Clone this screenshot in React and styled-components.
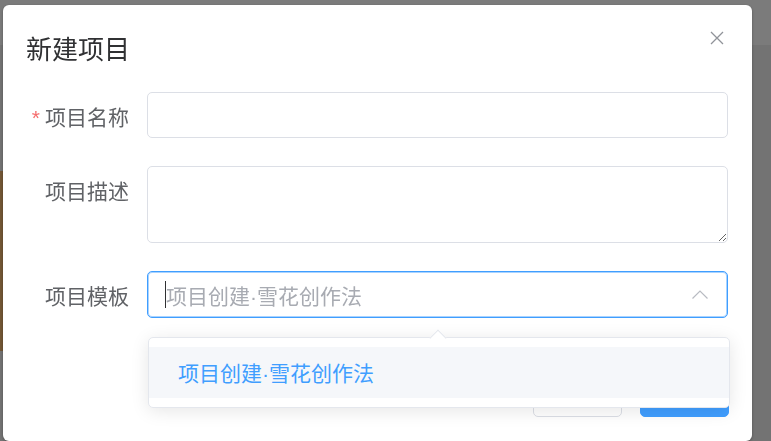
import React from "react";
import styled, { createGlobalStyle } from "styled-components";

const Global = createGlobalStyle`
  html, body { margin: 0; padding: 0; }
  body {
    width: 771px;
    height: 441px;
    overflow: hidden;
    font-family: "Liberation Sans", "Noto Sans CJK SC", sans-serif;
  }
  *, *::before, *::after { box-sizing: border-box; }
`;

/* page underneath the modal mask */
const Page = styled.div`
  width: 771px;
  height: 441px;
  display: flex;
  flex-direction: column;
  background: #e6e6e6;
`;
const TopBar = styled.header`
  flex: 0 0 45px;
  background: #f6f6f6;
`;
const Workspace = styled.main`
  flex: 1;
  padding-top: 126px;
`;
const CoverStrip = styled.div`
  width: 3px;
  height: 180px;
  background: #e6ae6c;
`;

/* modal */
const Mask = styled.div`
  position: fixed;
  inset: 0;
  background: rgba(0, 0, 0, 0.5);
  padding: 5px 0 0 3px;
`;
const Dialog = styled.div`
  width: 749px;
  height: 436px;
  background: #fff;
  border-radius: 6px;
  box-shadow: 0 1px 3px rgba(0, 0, 0, 0.3);
  display: flex;
  flex-direction: column;
`;
const Header = styled.div`
  display: flex;
  justify-content: space-between;
  align-items: flex-start;
  padding: 25px 24px 24px 23px;
`;
const Title = styled.h2`
  margin: 0;
  padding-top: 2px;
  font-size: 26px;
  line-height: 36px;
  font-weight: 400;
  color: #303133;
`;
const CloseButton = styled.button`
  width: 14px;
  height: 14px;
  margin: 1px 4px 0 0;
  padding: 0;
  border: 0;
  background: none;
  display: flex;
  cursor: pointer;
`;

const Form = styled.form`
  padding: 0 24px 0 23px;
`;
const FormItem = styled.div`
  display: grid;
  grid-template-columns: 121px 1fr;
  align-items: start;
  margin-bottom: 28px;
`;
const Label = styled.label`
  height: 46px;
  padding: 6px 18px 0 0;
  font-size: 21px;
  line-height: 40px;
  color: #606266;
  text-align: right;
  white-space: nowrap;
`;
const Required = styled.span`
  color: #f56c6c;
  margin-right: 5px;
`;
const Control = styled.div`
  position: relative;
`;
const TextInput = styled.input`
  display: block;
  width: 100%;
  height: 46px;
  padding: 0 19px;
  border: 1px solid #dcdfe6;
  border-radius: 5px;
  font: inherit;
  font-size: 21px;
  color: #606266;
  outline: none;
`;
const TextArea = styled.textarea`
  display: block;
  width: 100%;
  height: 77px;
  padding: 8px 19px;
  border: 1px solid #dcdfe6;
  border-radius: 5px;
  font: inherit;
  font-size: 21px;
  color: #606266;
  resize: vertical;
  outline: none;
`;
const SelectBox = styled.div`
  height: 47px;
  display: flex;
  align-items: center;
  padding: 0 19px 0 17px;
  border: 1px solid #409eff;
  border-radius: 5px;
  box-shadow: inset 0 0 0 1px rgba(64, 158, 255, 0.45);
`;
const Caret = styled.span`
  flex: 0 0 1px;
  height: 27px;
  background: #303133;
`;
const Placeholder = styled.span`
  flex: 1;
  font-size: 21px;
  color: #a8abb2;
  white-space: nowrap;
`;

const Popper = styled.div`
  position: absolute;
  z-index: 10;
  top: calc(100% + 19px);
  left: 1px;
  width: 582px;
  padding: 9px 0;
  background: #fff;
  border: 1px solid #e4e7ed;
  border-radius: 5px;
  box-shadow: 0 3px 18px rgba(0, 0, 0, 0.1);

  &::before {
    content: "";
    position: absolute;
    top: -6.5px;
    left: ${(p) => p.$arrowLeft}px;
    width: 12px;
    height: 12px;
    background: #fff;
    border-top: 1px solid #e4e7ed;
    border-left: 1px solid #e4e7ed;
    transform: rotate(45deg);
  }
`;
const Option = styled.div`
  height: 51px;
  padding: 2px 29px 0;
  line-height: 49px;
  font-size: 21px;
  color: ${(p) => (p.$selected ? "#409eff" : "#606266")};
  background: ${(p) => (p.$hover ? "#f5f7fa" : "transparent")};
  white-space: nowrap;
`;

const Footer = styled.div`
  margin-top: auto;
  display: flex;
  justify-content: flex-end;
  gap: 18px;
  padding: 0 23px 24px;
`;
const Button = styled.button`
  width: 89px;
  height: 46px;
  border-radius: 5px;
  font: inherit;
  font-size: 21px;
  border: 1px solid ${(p) => (p.$primary ? "#409eff" : "#dcdfe6")};
  background: ${(p) => (p.$primary ? "#409eff" : "#fff")};
  color: ${(p) => (p.$primary ? "#fff" : "#606266")};
`;

const CloseIcon = () => (
  <svg width="14" height="14" viewBox="0 0 14 14">
    <path d="M1 1 L13 13 M13 1 L1 13" stroke="#909399" strokeWidth="1.3" fill="none" />
  </svg>
);

const ChevronUp = () => (
  <svg width="16" height="9" viewBox="0 0 16 9">
    <path d="M0.5 8.5 L8 1 L15.5 8.5" stroke="#b8bbc2" strokeWidth="1.2" fill="none" />
  </svg>
);

export default function App() {
  return (
    <>
      <Global />
      <Page>
        <TopBar />
        <Workspace>
          <CoverStrip />
        </Workspace>
      </Page>
      <Mask>
        <Dialog>
          <Header>
            <Title>新建项目</Title>
            <CloseButton aria-label="关闭">
              <CloseIcon />
            </CloseButton>
          </Header>
          <Form>
            <FormItem>
              <Label>
                <Required>*</Required>项目名称
              </Label>
              <Control>
                <TextInput />
              </Control>
            </FormItem>
            <FormItem>
              <Label>项目描述</Label>
              <Control>
                <TextArea />
              </Control>
            </FormItem>
            <FormItem>
              <Label>项目模板</Label>
              <Control>
                <SelectBox>
                  <Caret />
                  <Placeholder>项目创建·雪花创作法</Placeholder>
                  <ChevronUp />
                </SelectBox>
                <Popper $arrowLeft={283}>
                  <Option $selected $hover>
                    项目创建·雪花创作法
                  </Option>
                </Popper>
              </Control>
            </FormItem>
          </Form>
          <Footer>
            <Button>取 消</Button>
            <Button $primary>确 定</Button>
          </Footer>
        </Dialog>
      </Mask>
    </>
  );
}
